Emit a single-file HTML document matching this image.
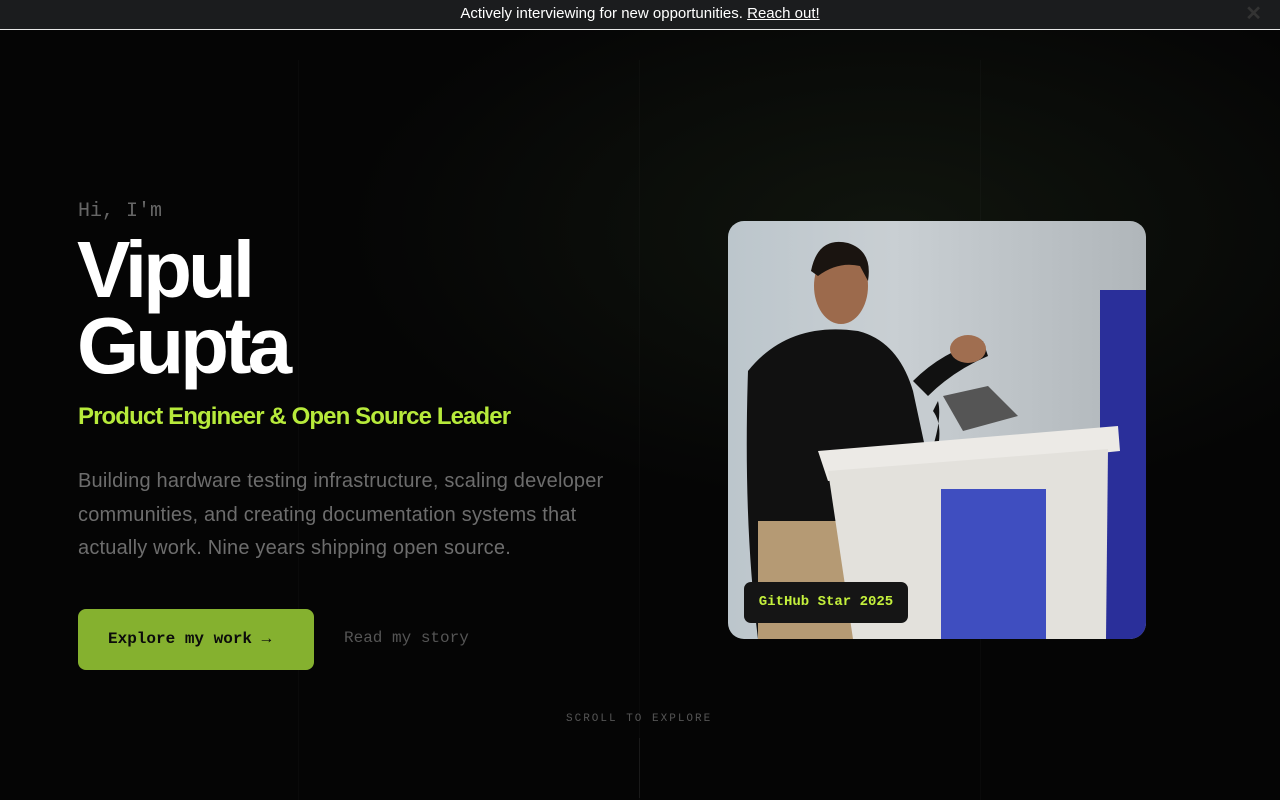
<!DOCTYPE html>
<html><head><meta charset="utf-8"><style>
*{margin:0;padding:0;box-sizing:border-box}
body{width:1280px;height:800px;overflow:hidden;background:#050505;font-family:"Liberation Sans",sans-serif;position:relative}
.bar{position:absolute;top:0;left:0;width:1280px;height:30px;background:#1b1c1e;border-bottom:1px solid #e8e8e8;color:#fff;font-size:15px;text-align:center;line-height:28px;letter-spacing:0px}
.bar a{color:#fff;text-decoration:underline}
.x{position:absolute;right:18px;top:0;font-size:20px;color:#333;font-weight:bold}
.glow{position:absolute;left:300px;top:30px;width:980px;height:500px;background:radial-gradient(ellipse at 60% 40%,rgba(30,40,25,0.45),rgba(0,0,0,0) 65%)}
.vl{position:absolute;top:60px;bottom:0;width:1px;background:rgba(255,255,255,0.025)}
.mono{font-family:"Liberation Mono",monospace}
.hi{position:absolute;left:78px;top:200px;font-size:20px;color:#666}
h1{position:absolute;left:77px;top:232px;font-size:80px;line-height:76px;color:#fff;font-weight:bold;letter-spacing:-4px}
.sub{position:absolute;left:78px;top:403px;font-size:24px;color:#b7ea3b;letter-spacing:-0.9px;font-weight:bold}
.p{position:absolute;left:78px;top:465px;width:560px;font-size:20px;line-height:33.5px;color:#6d6d6d;letter-spacing:0.2px}
.btn{position:absolute;left:78px;top:609px;width:236px;height:61px;background:#85b12f;border-radius:8px;color:#0b0b0b;font-size:16px;font-weight:bold;line-height:61px;padding-left:30px}
.rs{position:absolute;left:344px;top:629px;font-size:16px;color:#555}
.scroll{position:absolute;left:566px;top:713px;font-size:11px;letter-spacing:2px;color:#555}
.sline{position:absolute;left:639px;top:738px;width:1px;height:60px;background:#1a1a1a}
.photo{position:absolute;left:728px;top:221px;width:418px;height:418px;border-radius:16px;overflow:hidden;background:linear-gradient(90deg,#bcc6cc,#c9cfd3 40%,#b0b6ba)}
.tag{position:absolute;left:744px;top:582px;width:164px;height:41px;background:#151515;border-radius:7px;color:#c4f03c;font-size:14px;font-weight:bold;line-height:41px;text-align:center}
</style></head><body>
<div class="glow"></div>
<div class="vl" style="left:298px"></div><div class="vl" style="left:639px"></div><div class="vl" style="left:980px"></div>
<div class="bar">Actively interviewing for new opportunities. <a>Reach out!</a><span class="x">✕</span></div>
<div class="hi mono">Hi, I'm</div>
<h1>Vipul<br>Gupta</h1>
<div class="sub">Product Engineer &amp; Open Source Leader</div>
<div class="p">Building hardware testing infrastructure, scaling developer communities, and creating documentation systems that actually work. Nine years shipping open source.</div>
<div class="btn mono">Explore my work →</div>
<div class="rs mono">Read my story</div>
<div class="scroll mono">SCROLL TO EXPLORE</div>
<div class="sline"></div>
<div class="photo">
<svg width="418" height="418" viewBox="0 0 418 418">
<rect x="372" y="69" width="46" height="349" fill="#2a2f9a"/>
<path d="M20 150 Q60 100 130 110 Q170 120 185 170 L200 240 Q215 200 210 180 L205 190 Q220 210 200 260 L190 300 L150 418 L30 418 Q15 300 20 150Z" fill="#111"/>
<path d="M30 300 L130 300 L140 418 L30 418Z" fill="#b59a74"/>
<ellipse cx="113" cy="65" rx="27" ry="38" fill="#9c6a4c"/>
<path d="M83 50 Q90 15 120 22 Q145 30 140 60 L132 45 Q110 40 90 55Z" fill="#1a1410"/>
<path d="M185 160 Q215 130 255 120 L260 135 Q225 150 200 175Z" fill="#111"/>
<ellipse cx="240" cy="128" rx="18" ry="14" fill="#a06e50"/>
<path d="M215 175 L260 165 L290 195 L235 210Z" fill="#555"/>
<path d="M90 230 L390 205 L392 230 L100 260Z" fill="#eceae6"/>
<path d="M100 250 L380 228 L378 418 L125 418Z" fill="#e3e1dc"/>
<rect x="213" y="268" width="105" height="150" fill="#3f4ec0"/>
</svg>
</div>
<div class="tag mono">GitHub Star 2025</div>
</body></html>
